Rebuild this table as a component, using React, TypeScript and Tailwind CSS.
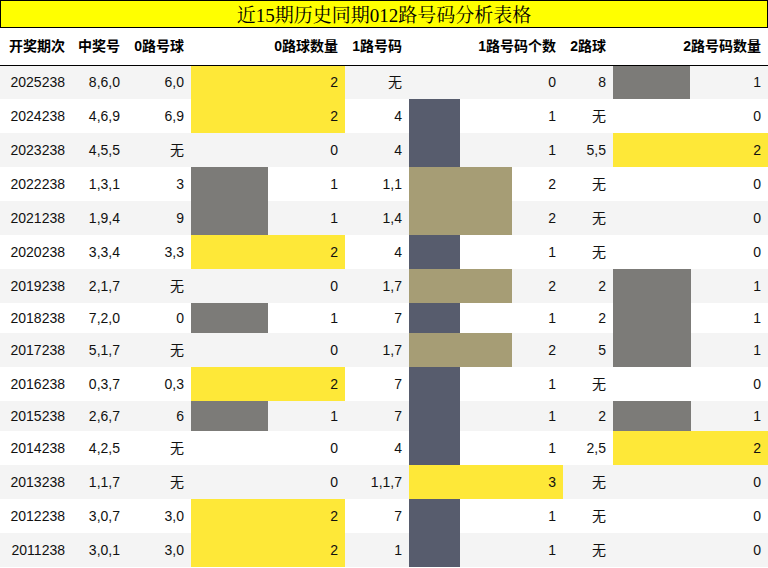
import React from "react";

type Row = [string, string, string, number, string, number, string, number];

const rows: Row[] = [
  ["2025238", "8,6,0", "6,0", 2, "无", 0, "8", 1],
  ["2024238", "4,6,9", "6,9", 2, "4", 1, "无", 0],
  ["2023238", "4,5,5", "无", 0, "4", 1, "5,5", 2],
  ["2022238", "1,3,1", "3", 1, "1,1", 2, "无", 0],
  ["2021238", "1,9,4", "9", 1, "1,4", 2, "无", 0],
  ["2020238", "3,3,4", "3,3", 2, "4", 1, "无", 0],
  ["2019238", "2,1,7", "无", 0, "1,7", 2, "2", 1],
  ["2018238", "7,2,0", "0", 1, "7", 1, "2", 1],
  ["2017238", "5,1,7", "无", 0, "1,7", 2, "5", 1],
  ["2016238", "0,3,7", "0,3", 2, "7", 1, "无", 0],
  ["2015238", "2,6,7", "6", 1, "7", 1, "2", 1],
  ["2014238", "4,2,5", "无", 0, "4", 1, "2,5", 2],
  ["2013238", "1,1,7", "无", 0, "1,1,7", 3, "无", 0],
  ["2012238", "3,0,7", "3,0", 2, "7", 1, "无", 0],
  ["2011238", "3,0,1", "3,0", 2, "1", 1, "无", 0],
];

function colorFor(v: number, max: number): string {
  const f = v / max;
  if (f >= 0.99) return "#fee838";
  if (Math.abs(f - 0.5) < 0.01) return "#7c7b78";
  if (f < 0.5) return "#575c6d";
  return "#a69d75";
}

function barStyle(v: number, max: number): React.CSSProperties {
  if (v <= 0) return {};
  const pct = (v / max) * 100;
  const c = colorFor(v, max);
  return {
    background: `linear-gradient(90deg, ${c} ${pct}%, transparent ${pct}%)`,
  };
}

const headers = ["开奖期次", "中奖号", "0路号球", "0路球数量", "1路号码", "1路号码个数", "2路球", "2路号码数量"];
const widths = ["w-[72px]", "w-[55px]", "w-[64px]", "w-[154px]", "w-[64px]", "w-[154px]", "w-[50px]", "w-[155px]"];

export default function App() {
  return (
    <div className="w-[768px] h-[568px] bg-white overflow-hidden text-[#111]" style={{ fontFamily: '"Liberation Sans", "Noto Sans CJK SC", sans-serif' }}>
      <div
        className="h-[28px] border border-black bg-[#ffff00] flex items-center justify-center pt-[3px] text-[19px] leading-none text-black"
        style={{ fontFamily: '"Liberation Serif", "Noto Serif CJK SC", "Noto Sans CJK SC", serif' }}
      >
        近15期历史同期012路号码分析表格
      </div>
      <table className="table-fixed border-collapse w-[768px] text-[14px]">
        <thead>
          <tr className="h-[37px] border-b border-black">
            {headers.map((h, i) => (
              <th key={i} className={`${widths[i]} px-0 pr-[7px] text-right font-bold text-black align-middle`}>
                {h}
              </th>
            ))}
          </tr>
        </thead>
        <tbody>
          {rows.map((r, idx) => {
            const tall = r.some((c) => c === "无");
            return (
              <tr key={idx} className={`${tall ? "h-[34px]" : "h-[30px]"} ${idx % 2 === 0 ? "bg-[#f4f4f4]" : "bg-white"}`}>
                <td className="p-0 pr-[7px] text-right align-middle">{r[0]}</td>
                <td className="p-0 pr-[7px] text-right align-middle">{r[1]}</td>
                <td className="p-0 pr-[7px] text-right align-middle">{r[2]}</td>
                <td className="p-0 pr-[7px] text-right align-middle" style={barStyle(r[3], 2)}>{r[3]}</td>
                <td className="p-0 pr-[7px] text-right align-middle">{r[4]}</td>
                <td className="p-0 pr-[7px] text-right align-middle" style={barStyle(r[5], 3)}>{r[5]}</td>
                <td className="p-0 pr-[7px] text-right align-middle">{r[6]}</td>
                <td className="p-0 pr-[7px] text-right align-middle" style={barStyle(r[7], 2)}>{r[7]}</td>
              </tr>
            );
          })}
        </tbody>
      </table>
    </div>
  );
}
